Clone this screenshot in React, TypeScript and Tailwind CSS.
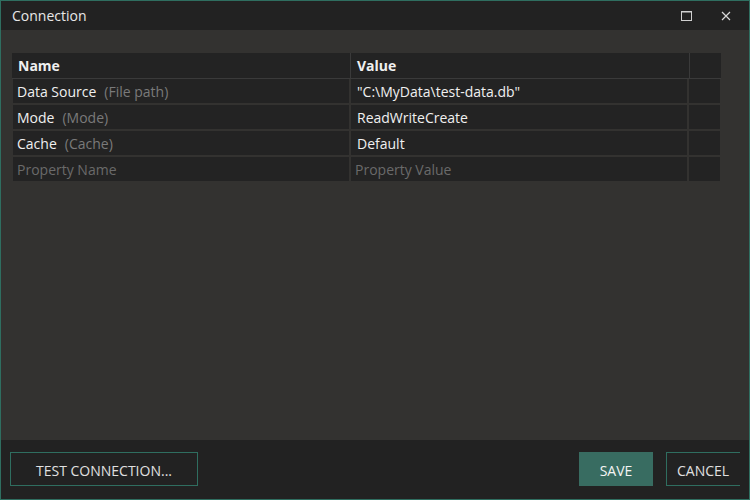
import React from "react";

const rows = [
  { name: "Data Source", hint: "(File path)", value: "\"C:\\MyData\\test-data.db\"" },
  { name: "Mode", hint: "(Mode)", value: "ReadWriteCreate" },
  { name: "Cache", hint: "(Cache)", value: "Default" },
];

export default function App() {
  return (
    <div
      className="w-[750px] h-[500px] flex flex-col border border-[#2f6e60] bg-[#333230] text-[#f0f0f0] overflow-hidden"
      style={{ fontFamily: '"Open Sans", "Noto Sans", sans-serif' }}
    >
      {/* Title bar */}
      <div className="h-[29px] shrink-0 bg-[#222222] flex items-center pl-[11px]">
        <span className="text-[14px] text-[#e8e8e8]">Connection</span>
        <div className="ml-auto flex items-center h-full">
          <div className="w-[40px] h-full flex items-center justify-center">
            <svg width="11" height="10" viewBox="0 0 11 10">
              <rect x="0.5" y="0.5" width="10" height="9" fill="none" stroke="#d0d0d0" strokeWidth="1" />
              <line x1="0" y1="1" x2="11" y2="1" stroke="#d0d0d0" strokeWidth="1" />
            </svg>
          </div>
          <div className="w-[40px] h-full flex items-center justify-center mr-[3px]">
            <svg width="10" height="10" viewBox="0 0 10 10">
              <path d="M1 1 L9 9 M9 1 L1 9" stroke="#d8d8d8" strokeWidth="1.2" />
            </svg>
          </div>
        </div>
      </div>

      {/* Content */}
      <div className="flex-1 pt-[23px] pl-[11px]">
        <div className="w-[709px] flex flex-col">
          {/* header */}
          <div className="flex h-[26px] bg-[#232323] border-b border-[#3a3a3a]">
            <div className="w-[339px] border-r border-[#3a3a3a] flex items-center pl-[6px] text-[14px] font-bold">Name</div>
            <div className="w-[339px] border-r border-[#3a3a3a] flex items-center pl-[6px] text-[14px] font-bold">Value</div>
            <div className="flex-1" />
          </div>
          {rows.map((r) => (
            <div key={r.name} className="flex h-[26px] gap-[2px] pl-[1px] pb-[2px]">
              <div className="w-[336px] bg-[#232323] flex items-center pl-[4px] text-[14px]">
                <span className="text-[#f0f0f0]">{r.name}</span>
                <span className="ml-[8px] text-[#7a7a7a]">{r.hint}</span>
              </div>
              <div className="w-[336px] bg-[#232323] flex items-center pl-[6px] text-[14px]">{r.value}</div>
              <div className="w-[31px] bg-[#232323]" />
            </div>
          ))}
          <div className="flex h-[24px] gap-[2px] pl-[1px]">
            <div className="w-[336px] bg-[#232323] flex items-center pl-[4px] text-[14px] text-[#6a6a6a]">Property Name</div>
            <div className="w-[336px] bg-[#232323] flex items-center pl-[4px] text-[14px] text-[#6a6a6a]">Property Value</div>
            <div className="w-[31px] bg-[#232323]" />
          </div>
        </div>
      </div>

      {/* Footer */}
      <div className="h-[59px] shrink-0 bg-[#222222] flex items-start pt-[12px] pl-[9px]">
        <button className="w-[188px] h-[34px] border border-[#2f6e60] text-[14px] text-[#e0e0e0] flex items-center justify-center pt-[2px]">
          TEST CONNECTION...
        </button>
        <button className="ml-auto w-[74px] h-[34px] bg-[#386c61] text-[14px] text-[#f4f4f4] flex items-center justify-center pt-[2px]">
          SAVE
        </button>
        <button className="ml-[13px] w-[74px] h-[34px] border border-r-0 border-[#2f6e60] text-[14px] text-[#e0e0e0] flex items-center pl-[10px] pt-[2px] mr-[9px]">
          CANCEL
        </button>
      </div>
    </div>
  );
}
